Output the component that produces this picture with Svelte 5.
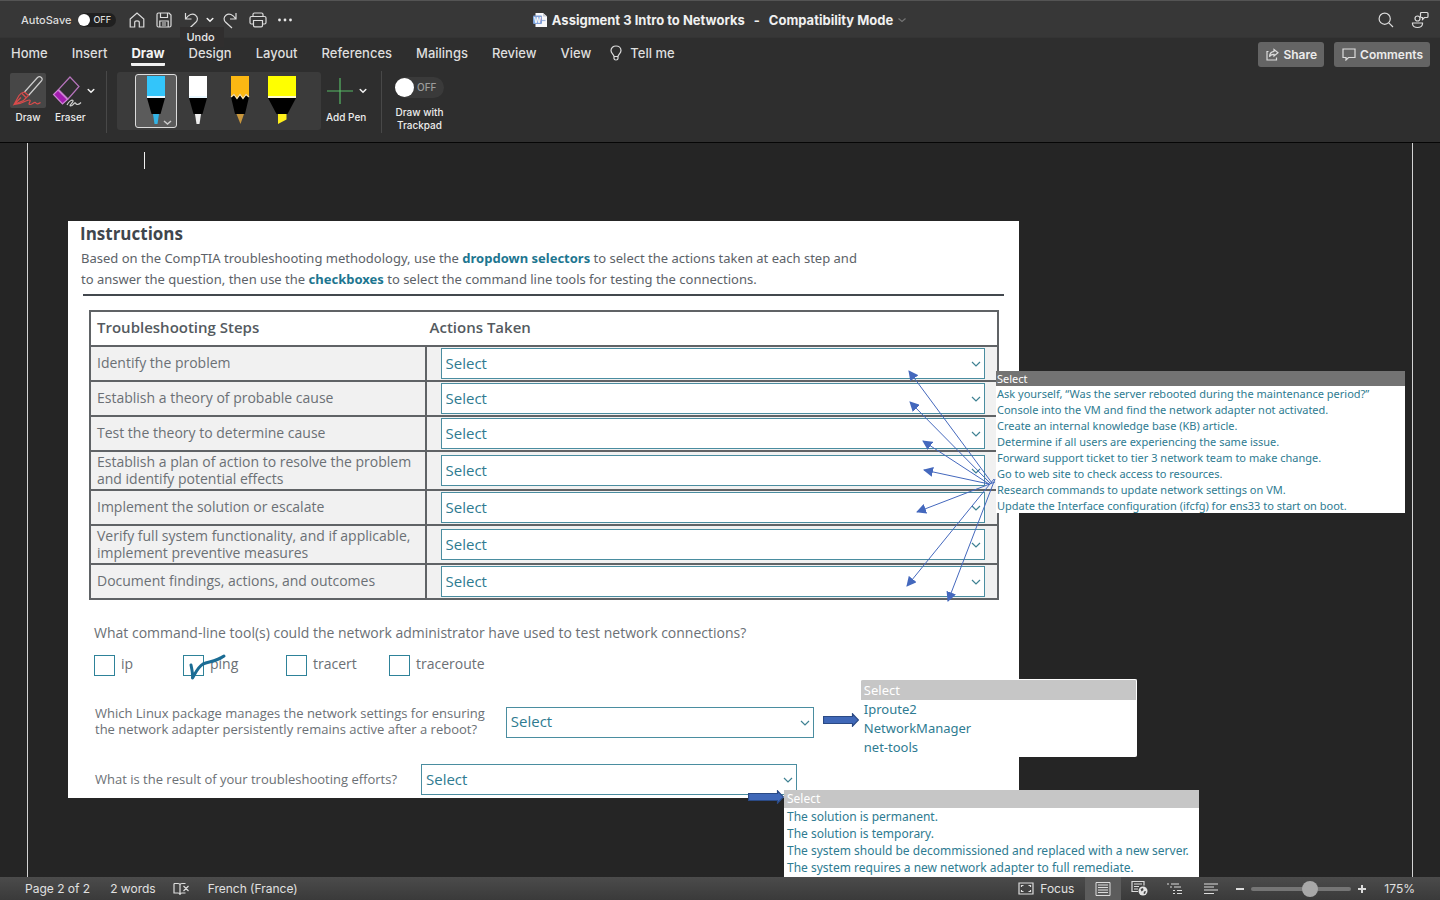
<script>
  const tabs = ['Home', 'Insert', 'Draw', 'Design', 'Layout', 'References', 'Mailings', 'Review', 'View'];
  let activeTab = $state('Draw');

  const pens = ['Blue pen', 'White pen', 'Pencil', 'Highlighter'];
  let activePen = $state('Blue pen');

  let autoSave = $state(false);
  let trackpad = $state(false);
  let zoom = $state(60);

  const actions = [
    'Ask yourself, “Was the server rebooted during the maintenance period?”',
    'Console into the VM and find the network adapter not activated.',
    'Create an internal knowledge base (KB) article.',
    'Determine if all users are experiencing the same issue.',
    'Forward support ticket to tier 3 network team to make change.',
    'Go to web site to check access to resources.',
    'Research commands to update network settings on VM.',
    'Update the Interface configuration (ifcfg) for ens33 to start on boot.'
  ];

  const packages = ['Iproute2', 'NetworkManager', 'net-tools'];

  const results = [
    'The solution is permanent.',
    'The solution is temporary.',
    'The system should be decommissioned and replaced with a new server.',
    'The system requires a new network adapter to full remediate.'
  ];

  const steps = [
    ['Identify the problem'],
    ['Establish a theory of probable cause'],
    ['Test the theory to determine cause'],
    ['Establish a plan of action to resolve the problem', 'and identify potential effects'],
    ['Implement the solution or escalate'],
    ['Verify full system functionality, and if applicable,', 'implement preventive measures'],
    ['Document findings, actions, and outcomes']
  ];

  let tools = $state([
    { name: 'ip', checked: false },
    { name: 'ping', checked: true },
    { name: 'tracert', checked: false },
    { name: 'traceroute', checked: false }
  ]);

  // start and tip of every arrow between the rows and the list
  const arrows = [
    [92, 118, 9, 6],
    [91, 119, 10, 37],
    [89, 119, 23, 76],
    [89, 119, 24, 105],
    [95, 117, 17, 147],
    [94, 114, 7, 221],
    [95, 114, 48, 236]
  ];
</script>

{#snippet chevron()}
  <svg class="chevron" width="10" height="8" viewBox="0 0 10 8" aria-hidden="true"><path d="M2.2 2.5 L5 5.3 L7.8 2.5" /></svg>
{/snippet}

{#snippet dropdown(id, label, options)}
  <span class="dropdown">
    <select {id} aria-label={label}>
      <option>Select</option>
      {#each options as option}<option>{option}</option>{/each}
    </select>
    <svg width="10" height="8" viewBox="0 0 10 8" aria-hidden="true"><path d="M1 2 L5 6 L9 2" /></svg>
  </span>
{/snippet}

{#snippet openList(name, options)}
  <ul class="open-list {name}">
    <li class="head">Select</li>
    {#each options as option}<li>{option}</li>{/each}
  </ul>
{/snippet}

{#snippet blockArrow()}
  <svg class="block-arrow" width="36" height="14" viewBox="0 0 36 14" aria-hidden="true">
    <path d="M.5 3.5 H29.5 V.8 L35.5 7 L29.5 13.2 V10.5 H.5 Z" fill="#4068b8" stroke="#2b4a85" />
  </svg>
{/snippet}

<div class="app">
  <header class="title-bar">
    <div class="quick">
      <span id="autosave">AutoSave</span>
      <button class="toggle" role="switch" aria-checked={autoSave} aria-labelledby="autosave" onclick={() => (autoSave = !autoSave)}>
        <i></i>{autoSave ? 'ON' : 'OFF'}
      </button>
      <button aria-label="Home">
        <svg width="16" height="16" viewBox="0 0 16 16"><path d="M1.2 7 L8 1 L14.8 7 V15 H10.3 V10.5 Q10.3 8.8 8 8.8 T5.7 10.5 V15 H1.2 Z" /></svg>
      </button>
      <button class="save" aria-label="Save">
        <svg width="16" height="16" viewBox="0 0 16 16"><path d="M1 2.5 Q1 1 2.5 1 H13 L15 3 V13.5 Q15 15 13.5 15 H2.5 Q1 15 1 13.5 Z M4.5 1 V5.5 H11.5 V1 M3.8 15 V9 H12.2 V15 M6 11 H10 M6 13 H10" /></svg>
      </button>
      <div class="undo">
        <button aria-label="Undo">
          <svg width="16" height="17" viewBox="0 0 16 17"><path d="M1.5 1 V7 H7.5 M1.8 6.7 C4.5 2.5 8.5 1 11.3 3 C14.3 5.2 13.8 8.3 11.8 10.3 L5.8 16" /></svg>
        </button>
        <span class="tooltip" role="tooltip">Undo</span>
      </div>
      <button aria-label="Undo history">{@render chevron()}</button>
      <button class="redo" aria-label="Redo">
        <svg width="16" height="17" viewBox="0 0 16 17"><path d="M14 1 V7 H8 M13.7 6.7 C11 2.5 7 1 4.2 3 C1.2 5.2 1.7 8.3 3.7 10.3 L10 16" /></svg>
      </button>
      <button class="print" aria-label="Print">
        <svg width="18" height="16" viewBox="0 0 18 16"><path d="M4 4.5 V2.5 Q4 1 5.5 1 H12.5 Q14 1 14 2.5 V4.5 M4 12 H2.5 Q1 12 1 10.5 V6 Q1 4.5 2.5 4.5 H15.5 Q17 4.5 17 6 V10.5 Q17 12 15.5 12 H14 M4.5 8.5 H13.5 V13.5 Q13.5 14.8 12.2 14.8 H5.8 Q4.5 14.8 4.5 13.5 Z" /></svg>
      </button>
      <button aria-label="More">
        <svg width="14" height="4" viewBox="0 0 14 4"><g fill="#e8e8e8" stroke="none"><circle cx="1.5" cy="2" r="1.4" /><circle cx="7" cy="2" r="1.4" /><circle cx="12.5" cy="2" r="1.4" /></g></svg>
      </button>
    </div>

    <h1>
      <svg width="15" height="16" viewBox="0 0 15 16" aria-hidden="true">
        <path d="M2.5 1 H10 L14 4.5 V15 H2.5 Z" fill="#f8f8fa" stroke="none" />
        <path d="M10 1 V4.5 H14 Z" fill="#c9ccd3" stroke="none" />
        <path d="M9 8.5 H12.5" stroke="#9fb4dd" />
        <rect x="0" y="3.5" width="9" height="8.5" rx="1" fill="#7f9fd6" stroke="none" />
        <text x="4.5" y="10.5" text-anchor="middle">W</text>
      </svg>
      <span>Assigment 3 Intro to Networks</span><span>-</span><span>Compatibility Mode</span>
      <svg class="more" width="10" height="8" viewBox="0 0 10 8" aria-hidden="true"><path d="M1.5 2.5 L5 5.5 L8.5 2.5" /></svg>
    </h1>

    <div class="title-right">
      <button aria-label="Search">
        <svg width="16" height="16" viewBox="0 0 16 16"><path d="M10.8 10.8 L15 15 M12.3 6.7 A5.6 5.6 0 1 1 1.1 6.7 A5.6 5.6 0 1 1 12.3 6.7 Z" /></svg>
      </button>
      <button aria-label="Account">
        <svg width="18" height="18" viewBox="0 0 18 18"><circle cx="6.5" cy="7.5" r="2.5" /><path d="M1.5 12 H11.5 V13 Q11 16.5 6.5 16.5 T1.5 13 Z M10.5 1.5 H16 Q17 1.5 17 2.5 V5.5 Q17 6.5 16 6.5 H13.5 L11.5 8.5 V6.5 H10.5 Q9.5 6.5 9.5 5.5 V2.5 Q9.5 1.5 10.5 1.5" /></svg>
      </button>
    </div>
  </header>

  <nav class="tabs">
    {#each tabs as tab}
      <button class:active={activeTab === tab} onclick={() => (activeTab = tab)}>{tab}</button>
    {/each}
    <button class="tell">
      <svg width="12" height="16" viewBox="0 0 12 16" aria-hidden="true"><path d="M4 11.5 C4 9.5 1 8.5 1 5.5 C1 3 3.2 1 6 1 S11 3 11 5.5 C11 8.5 8 9.5 8 11.5 Z M4 11.5 V13.5 Q4 15 6 15 T8 13.5 V11.5" /></svg>
      Tell me
    </button>
    <div class="tab-actions">
      <button>
        <svg width="13" height="13" viewBox="0 0 13 13" aria-hidden="true"><path d="M2.5 3.5 H1 V12 H10.5 V9.5 M8 1.5 L12 4.7 L8 8 V6.3 Q5 6.2 3.5 8.8 Q3.8 3.8 8 3.3 Z" /></svg>
        Share
      </button>
      <button>
        <svg width="14" height="13" viewBox="0 0 14 13" aria-hidden="true"><path d="M1 1 H13 V9.5 H6.5 L4 12 V9.5 H1 Z" /></svg>
        Comments
      </button>
    </div>
  </nav>

  <section class="ribbon">
    <button class="tool draw">
      <span class="tile">
        <svg width="32" height="32" viewBox="0 0 32 32" aria-hidden="true">
          <path d="M12.5 17 L25.5 2.5 Q27.5 .8 29.3 2.5 T29.3 6 L16.5 20.5" stroke="#cfcfcf" />
          <path d="M12.5 17 L16.5 20.5 L11.5 25.5 L2 29.5 L7 20.5 Q9 17.5 12.5 17 M10 18.5 L14 22.5 M2 29.5 L9 22.5 M2 29.5 C9 30 14 24.5 17.5 25 C20 25.5 15 29.5 18 29.5 C20.5 29.5 22 26.5 23.5 27.5 C24.5 29.5 26.5 29 28.5 27.5" stroke="#d94b4b" />
        </svg>
      </span>
      Draw
    </button>
    <button class="tool eraser">
      <span class="tile">
        <svg width="30" height="32" viewBox="0 0 30 32" aria-hidden="true">
          <path d="M18 2 L27 11.5 L16 24 L6.5 14.5 Z" stroke="#b774bd" />
          <path d="M6 15 L15.5 24.5 L10.5 29 L1.5 19.5 Z" fill="#a21caf" stroke="#cf86d6" />
          <path d="M15 30 C17 26 20 24.5 21 25.5 C22 27 16.5 30.5 18.5 31 C21.5 31 21.5 27.5 23.5 28 C24.5 30.5 27 29.5 29 27.5" stroke="#d0d0d0" />
        </svg>
        {@render chevron()}
      </span>
      <span class="tool-name">Eraser</span>
    </button>
    <span class="divider"></span>

    <div class="pens">
      {#each pens as pen, i}
        <button class:active={activePen === pen} aria-label={pen} onclick={() => (activePen = pen)}>
          <svg width="40" height="52" viewBox="0 0 40 52" aria-hidden="true">
            {#if i === 3}
              <path d="M6 1 H34 V21 H6 Z" fill="#ff0" />
              <path d="M6 21 H34 V23 H6 Z" fill="#fffbd0" />
              <path d="M6 23 H34 L25.5 39 H14.5 Z" fill="#000" />
              <path d="M16 39 H24.5 V44.5 L16 49 Z" fill="#ffef1a" />
            {:else if i === 2}
              <path d="M11 1 H29 V23 L26 19 L23 23 L20 19 L17 23 L14 19 L11 23 Z" fill="#fcb813" />
              <path d="M11 22 L14 20 L17 24 L20 20 L23 24 L26 20 L29 22 L25 39 H15 Z" fill="#000" />
              <path d="M11 22 L14 19.5 L17 23.5 L20 19.5 L23 23.5 L26 19.5 L29 22" fill="none" stroke="#ffe9b5" />
              <path d="M16.5 39 H24 L20.5 49 Z" fill="#c8963c" />
            {:else}
              <path d="M11 1 H29 V21 H11 Z" fill={i === 0 ? '#33c5fa' : '#fff'} />
              <path d="M11 21 H29 V23 H11 Z" fill="#e8f7ff" />
              <path d="M11 23 H29 L24.5 39 H15.5 Z" fill="#000" />
              <path d="M17 39 H23 L21.5 49 H18.5 Z" fill={i === 0 ? '#33b4e6' : '#eee'} />
              {#if i === 0}<path d="M28 46 L31.5 49 L35 46" fill="none" stroke="#ccc" stroke-width="1.5" />{/if}
            {/if}
          </svg>
        </button>
      {/each}
    </div>

    <button class="tool add">
      <span class="tile">
        <svg width="28" height="28" viewBox="0 0 28 28" aria-hidden="true"><path d="M14 1 V27 M1 14 H27" stroke="#57b865" /></svg>
        {@render chevron()}
      </span>
      <span class="tool-name">Add Pen</span>
    </button>
    <span class="divider"></span>

    <div class="trackpad">
      <button class="toggle large" role="switch" aria-checked={trackpad} aria-labelledby="trackpad" onclick={() => (trackpad = !trackpad)}>
        <i></i>{trackpad ? 'ON' : 'OFF'}
      </button>
      <span id="trackpad">Draw with<br />Trackpad</span>
    </div>
  </section>

  <main>
    <div class="page">
      <div class="caret"></div>
      <article>
        <h2>Instructions</h2>
        <p class="intro">
          Based on the CompTIA troubleshooting methodology, use the <b>dropdown selectors</b> to select the actions taken at each step and<br />
          to answer the question, then use the <b>checkboxes</b> to select the command line tools for testing the connections.
        </p>
        <hr />

        <div class="steps">
          <table>
            <thead>
              <tr><th>Troubleshooting Steps</th><th>Actions Taken</th></tr>
            </thead>
            <tbody>
              {#each steps as lines, i}
                <tr class:tall={lines.length > 1}>
                  <td>{lines[0]}{#if lines[1]}<br />{lines[1]}{/if}</td>
                  <td>{@render dropdown('step' + i, lines.join(' '), actions)}</td>
                </tr>
              {/each}
            </tbody>
          </table>

          <svg class="arrows" width="100" height="240" viewBox="0 0 100 240" aria-hidden="true">
            <defs>
              <marker id="head" markerUnits="userSpaceOnUse" markerWidth="10" markerHeight="10" refX="9" refY="5" orient="auto">
                <path d="M0 0 L10 5 L0 10 Z" fill="#4468bd" />
              </marker>
            </defs>
            {#each arrows as [x1, y1, x2, y2]}
              <line {x1} {y1} {x2} {y2} stroke="#4468bd" marker-end="url(#head)" />
            {/each}
          </svg>
          {@render openList('actions', actions)}
        </div>

        <fieldset>
          <legend>What command-line tool(s) could the network administrator have used to test network connections?</legend>
          {#each tools as tool}
            <label>
              <input type="checkbox" bind:checked={tool.checked} />
              {tool.name}
              {#if tool.checked}
                <svg class="tick" width="44" height="32" viewBox="0 0 44 32" aria-hidden="true"><path d="M8 14 C9 19 10 23 9.5 27 C13 21 15 16 20 13 C27 10.5 34 10 41 5" /></svg>
              {/if}
            </label>
          {/each}
        </fieldset>

        <div class="question package">
          <label for="package">Which Linux package manages the network settings for ensuring<br />the network adapter persistently remains active after a reboot?</label>
          <div class="answer">
            {@render dropdown('package', undefined, packages)}
            {@render blockArrow()}
            {@render openList('packages', packages)}
          </div>
        </div>

        <div class="question result">
          <label for="result">What is the result of your troubleshooting efforts?</label>
          <div class="answer">
            {@render dropdown('result', undefined, results)}
            {@render blockArrow()}
            {@render openList('results', results)}
          </div>
        </div>
      </article>
    </div>
  </main>

  <footer>
    <button>Page 2 of 2</button>
    <button class="words">2 words</button>
    <button class="proof" aria-label="Proofing">
      <svg width="17" height="14" viewBox="0 0 17 14"><path d="M7 2 V13 M1 1.5 H5 Q7 1.5 7 3 Q7 1.5 9 1.5 H12.5 M1 1.5 V11 H5 Q7 11 7 12.5 Q7 11 9 11 H12.5 M10.5 4 L15.5 9 M15.5 4 L10.5 9" /></svg>
    </button>
    <button>French (France)</button>
    <span class="spacer"></span>
    <button class="focus">
      <svg width="16" height="13" viewBox="0 0 16 13" aria-hidden="true"><path d="M1 1 H15 V12 H1 Z M3.5 5 V3.5 H5.5 M10.5 3.5 H12.5 V5 M3.5 8 V9.5 H5.5 M10.5 9.5 H12.5 V8" /></svg>
      Focus
    </button>
    <button class="view active" aria-label="Print layout">
      <svg width="16" height="14" viewBox="0 0 16 14"><path d="M1 .5 H15 V13.5 H1 Z M3 3 H13 M3 5.5 H13 M3 8 H13 M3 10.5 H13" stroke-width="1" /></svg>
    </button>
    <button class="view" aria-label="Web layout">
      <svg width="17" height="15" viewBox="0 0 17 15"><path d="M7 10.5 H1 V.5 H13 V4.5 M3 3 H11 M3 5.5 H8 M3 8 H7" /><circle cx="12" cy="10" r="4.5" fill="#e4e4e4" stroke="none" /><path d="M9.5 8 L12 7 L12.5 9 L10.5 10.5 Z M13 10.5 L15 10 L14 13 L12.5 12.5 Z" fill="#444" stroke="none" /></svg>
    </button>
    <button class="view" aria-label="Outline">
      <svg width="16" height="12" viewBox="0 0 16 12"><path d="M0 1 H2 M4 1 H12 M3 4 H5 M7 4 H14 M6 7.500 H8 M10 7.500 H15 M6 10.500 H8 M10 10.500 H15" /></svg>
    </button>
    <button class="view" aria-label="Draft">
      <svg width="15" height="12" viewBox="0 0 15 12"><path d="M0 1 H14 M0 4 H10 M0 7 H14 M0 10.500 H10" /></svg>
    </button>
    <div class="zoom">
      <button aria-label="Zoom out"><svg width="10" height="10" viewBox="0 0 10 10"><path d="M1 5 H9" stroke-width="2" /></svg></button>
      <input type="range" min="0" max="100" bind:value={zoom} aria-label="Zoom" />
      <button aria-label="Zoom in"><svg width="10" height="10" viewBox="0 0 10 10"><path d="M1 5 H9 M5 1 V9" stroke-width="2" /></svg></button>
      <output>175%</output>
    </div>
  </footer>
</div>

<style>
  :global(body) {
    background: #252525;
  }

  .app {
    display: flex;
    flex-direction: column;
    height: 100vh;
    overflow: hidden;
    background: #2e2e2e;
    color: #dedede;
    font: 500 13px/16px Inter, "Liberation Sans", sans-serif;
  }

  button {
    display: flex;
    align-items: center;
    justify-content: center;
    margin: 0;
    padding: 0;
    border: 0;
    background: none;
    color: inherit;
    font: inherit;
  }

  svg {
    display: block;
    flex: none;
    fill: none;
    stroke: #dcdcdc;
    stroke-width: 1.2;
  }

  .chevron {
    stroke: #f2f2f2;
    stroke-width: 1.5;
    stroke-linecap: round;
  }

  /* title bar */
  .title-bar {
    display: grid;
    grid-template-columns: 1fr auto 1fr;
    align-items: center;
    height: 38px;
    flex: none;
    box-sizing: border-box;
    border-top: 1px solid #545454;
    border-bottom: 1px solid #343434;
    background: #373737;
    padding: 2px 11px 0;
  }

  .quick {
    display: flex;
    align-items: center;
    padding-left: 10px;
    font-size: 11px;
  }

  .toggle {
    width: 38px;
    height: 14px;
    gap: 3px;
    justify-content: flex-start;
    margin: 0 13px 0 7px;
    border-radius: 7px;
    background: #202020;
    font-size: 9px;
  }

  .toggle i {
    width: 12px;
    height: 12px;
    border-radius: 50%;
    background: #fff;
  }

  .save {
    margin-left: 11px;
  }

  .undo {
    position: relative;
    margin: 0 5px 0 12px;
  }

  .redo {
    margin-left: 7px;
  }

  .print {
    margin: 0 11px;
  }

  .tooltip {
    position: absolute;
    top: 15px;
    left: -4px;
    z-index: 5;
    padding: 2px 9px 2px 6px;
    background: #302e2e;
    color: #e8e8e8;
    font-size: 11px;
  }

  h1 {
    display: flex;
    align-items: center;
    gap: 4px;
    margin: 0;
    color: #f0f0f0;
    font-size: 13px;
    font-weight: 700;
    white-space: pre;
  }

  h1 span + span {
    margin-left: 5px;
  }

  h1 text {
    fill: #fff;
    stroke: none;
    font-size: 7px;
  }

  h1 .more {
    stroke: #747474;
  }

  .title-right {
    display: flex;
    justify-content: flex-end;
    gap: 17px;
  }

  /* tabs */
  .tabs {
    display: flex;
    align-items: flex-start;
    gap: 24px;
    padding: 4px 10px 0 11px;
    flex: none;
  }

  .tabs > button {
    padding: 3px 0 2px;
    border-bottom: 3px solid transparent;
  }

  .tabs > .active {
    border-color: #f0f0f0;
    border-radius: 1px;
    color: #f4f4f4;
    font-weight: 700;
  }

  .tabs > .tell {
    gap: 8px;
    margin-left: -5px;
  }

  .tab-actions {
    display: flex;
    gap: 10px;
    margin-left: auto;
  }

  .tab-actions button {
    gap: 4px;
    height: 25px;
    padding: 0 7px 0 8px;
    border-radius: 3px;
    background: #646464;
    color: #ececec;
    font-size: 12px;
    font-weight: 600;
  }

  /* ribbon */
  .ribbon {
    display: flex;
    align-items: flex-start;
    height: 71px;
    flex: none;
    padding: 4px 10px 0;
    border-bottom: 1px solid #060606;
    color: #ececec;
    font-size: 10px;
    line-height: 13px;
  }

  .tool {
    flex-direction: column;
    gap: 3px;
    margin-top: 2px;
  }

  .tile {
    display: flex;
    align-items: center;
    justify-content: center;
    height: 35px;
  }

  .draw .tile {
    width: 36px;
    border-radius: 2px;
    background: #474747;
  }

  .eraser,
  .add {
    align-items: flex-start;
  }

  .eraser {
    margin-left: 6px;
  }

  .add {
    margin-right: 3px;
  }

  .tile .chevron {
    margin-left: 4px;
  }

  .tool-name {
    padding-left: 3px;
  }

  .add .tool-name {
    padding: 0;
  }

  .divider {
    width: 1px;
    height: 62px;
    margin: 0 10px;
    background: #484848;
  }

  .pens {
    display: flex;
    margin-top: 1px;
    margin-right: 5px;
    padding: 2px 18px;
    border-radius: 3px;
    background: #3b3b3b;
  }

  .pens button {
    width: 42px;
    height: 54px;
    box-sizing: border-box;
    border: 1px solid transparent;
    border-radius: 3px;
  }

  .pens .active {
    border-color: #dcdcdc;
    background: #5b5b5b;
  }

  .pens svg {
    stroke: none;
  }

  .trackpad {
    display: flex;
    flex-direction: column;
    align-items: center;
    gap: 8px;
    margin: 6px 0 0 3px;
    text-align: center;
  }

  .large {
    width: 49px;
    height: 21px;
    margin: 0;
    border-radius: 11px;
    background: #3a3a3a;
    color: #9c9c9c;
    font-size: 10px;
  }

  .large i {
    width: 19px;
    height: 19px;
  }

  /* document */
  main {
    flex: 1;
    min-height: 0;
    overflow: hidden;
    background: #252525;
    padding: 0 27px;
  }

  .page {
    height: 100%;
    padding: 9px 393px 0 40px;
    box-sizing: border-box;
    border: solid #d4d4d4;
    border-width: 0 1px;
  }

  .caret {
    width: 1px;
    height: 17px;
    margin: 0 0 52px 76px;
    background: #f0f0f0;
  }

  article {
    padding: 1px 0 3px;
    background: #fff;
    color: #5c6268;
    font: 400 13px/16px "Open Sans", "Noto Sans", sans-serif;
  }

  h2 {
    margin: 0 0 2px 12px;
    color: #3f464d;
    font-size: 17px;
    font-weight: 700;
    line-height: 24px;
  }

  .intro {
    margin: 0 0 4px 13px;
    font-family: "Noto Sans", "Open Sans", sans-serif;
    line-height: 21px;
    white-space: nowrap;
  }

  .intro b {
    color: #1d7690;
  }

  hr {
    height: 2px;
    margin: 0 15px 14px;
    border: 0;
    background: #43484e;
  }

  .steps {
    position: relative;
    margin: 0 20px 0 21px;
  }

  table {
    width: 100%;
    border: 2px solid #606366;
    border-collapse: collapse;
    table-layout: fixed;
    font-size: 14px;
    line-height: 17px;
  }

  tr {
    height: 35px;
    border-bottom: 2px solid #606366;
  }

  .tall {
    height: 39px;
  }

  th {
    width: 36.5%;
    padding: 0 6px 2px;
    color: #545a60;
    font-size: 15px;
    font-weight: 600;
    text-align: left;
  }

  th + th {
    width: 63.5%;
    padding-left: 4px;
  }

  td {
    padding: 0 6px 2px;
    background: #f1f1f1;
    color: #6b7075;
    white-space: nowrap;
  }

  td + td {
    padding: 0 12px 0 14px;
    border-left: 2px solid #606366;
  }

  .dropdown {
    position: relative;
    display: block;
  }

  select {
    display: block;
    width: 100%;
    height: 31px;
    padding: 0 24px 2px 4px;
    appearance: none;
    border: 1px solid #4a8da0;
    border-radius: 0;
    background: #fff;
    color: #2e7b91;
    font: 400 15px/20px "Open Sans", "Noto Sans", sans-serif;
  }

  .dropdown svg {
    position: absolute;
    top: 12px;
    right: 4px;
    stroke: #3f8293;
    pointer-events: none;
  }

  .arrows {
    position: absolute;
    top: 55px;
    right: -1px;
    pointer-events: none;
    stroke-width: 1;
  }

  .arrows path {
    stroke: none;
  }

  /* expanded option lists lying over the document */
  .open-list {
    position: absolute;
    margin: 0;
    padding: 0;
    overflow: hidden;
    background: #fff;
    color: #2e7b91;
    font-family: "Noto Sans", "Open Sans", sans-serif;
    list-style: none;
    white-space: nowrap;
  }

  .head {
    background: #c6c6c6;
    color: #fff;
  }

  .actions {
    top: 61px;
    left: calc(100% - 3px);
    width: 409px;
    height: 142px;
    font-size: 11px;
    line-height: 16px;
  }

  .actions li {
    padding-left: 1px;
  }

  .actions .head {
    background: #737373;
    line-height: 15px;
  }

  fieldset {
    display: grid;
    grid-template-columns: 89px 103px 103px auto;
    margin: 23px 0 29px 26px;
    padding: 0;
    border: 0;
    color: #6b7075;
    font-size: 14px;
  }

  legend {
    padding: 0;
    margin-bottom: 12px;
    line-height: 20px;
  }

  fieldset label {
    position: relative;
    display: flex;
    align-items: flex-start;
    gap: 6px;
    line-height: 18px;
  }

  fieldset input {
    width: 21px;
    height: 21px;
    margin: 0;
    appearance: none;
    border: 1px solid #2e8299;
    background: #fff;
  }

  .tick {
    position: absolute;
    top: -4px;
    left: 0;
    stroke: #1b6c94;
    stroke-width: 3;
    stroke-linecap: round;
    stroke-linejoin: round;
  }

  .question {
    display: flex;
    align-items: center;
    gap: 21px;
    margin-left: 27px;
    color: #6b7075;
    white-space: nowrap;
  }

  .question label {
    padding-bottom: 2px;
  }

  .result {
    gap: 24px;
    margin-top: 25px;
  }

  .answer {
    position: relative;
    width: 308px;
  }

  .result .answer {
    width: 376px;
  }

  .block-arrow {
    position: absolute;
    top: 6px;
    left: calc(100% + 9px);
  }

  .packages {
    top: -28px;
    left: calc(100% + 47px);
    width: 275px;
    border: solid #fff;
    border-width: 1px 1px 0 0;
    border-radius: 2px;
    font-size: 13px;
    line-height: 19px;
  }

  .packages li,
  .results li {
    padding-left: 3px;
  }

  .packages .head {
    line-height: 20px;
  }

  .result .block-arrow {
    top: 26px;
    left: calc(100% - 49px);
  }

  .results {
    top: 26px;
    left: calc(100% - 13px);
    width: 415px;
    padding-bottom: 4px;
    font-size: 12px;
    line-height: 17px;
  }

  .results .head {
    line-height: 18px;
  }

  /* status bar */
  footer {
    display: flex;
    align-items: stretch;
    height: 23px;
    flex: none;
    padding: 0 25px;
    background: linear-gradient(#4b4b4b, #3a3a3a);
    color: #e0e0e0;
    font-size: 12px;
    font-weight: 400;
  }

  .words {
    margin: 0 17px 0 20px;
  }

  .proof {
    margin-right: 18px;
  }

  .spacer {
    flex: 1;
  }

  .focus {
    gap: 6px;
    margin-right: 11px;
  }

  .view {
    width: 36px;
  }

  .view.active {
    background: #5c5c5c;
  }

  .zoom {
    display: flex;
    align-items: center;
    gap: 6px;
    margin-left: 6px;
  }

  .zoom input {
    width: 100px;
    height: 16px;
    margin: 0;
    appearance: none;
    background: none;
  }

  .zoom input::-webkit-slider-runnable-track {
    height: 4px;
    border-radius: 2px;
    background: #757575;
  }

  .zoom input::-webkit-slider-thumb {
    width: 16px;
    height: 16px;
    margin-top: -6px;
    appearance: none;
    border-radius: 50%;
    background: #a8a8a8;
  }

  .zoom output {
    margin-left: 11px;
  }
</style>
